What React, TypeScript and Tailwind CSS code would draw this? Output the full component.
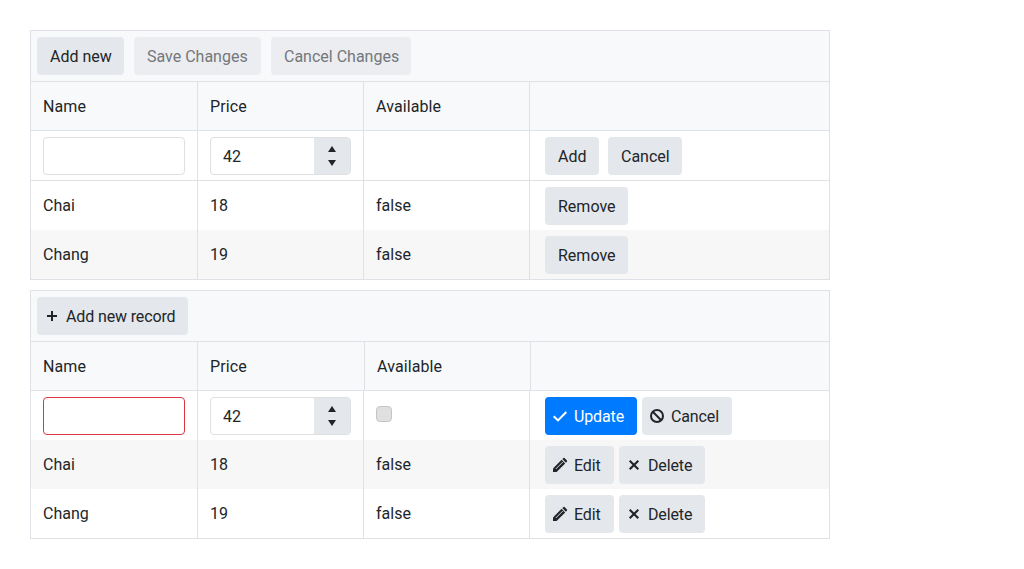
import type { ReactNode } from 'react';
import clsx from 'clsx';

const line = 'border-[#dee2e6]';

function Icon({ children }: { children: ReactNode }) {
  return (
    <svg className="h-4 w-4 shrink-0" viewBox="0 0 16 16" fill="none">
      {children}
    </svg>
  );
}

const PlusIcon = () => (
  <Icon>
    <path d="M7 3h2v4h4v2H9v4H7V9H3V7h4z" fill="currentColor" />
  </Icon>
);

const CheckIcon = () => (
  <Icon>
    <path d="M1.7 8.2 6 12.4 14.3 4" stroke="currentColor" strokeWidth="2" />
  </Icon>
);

const CancelIcon = () => (
  <Icon>
    <circle cx="8" cy="8" r="6" stroke="currentColor" strokeWidth="2" />
    <path d="M3.8 3.8 12.2 12.2" stroke="currentColor" strokeWidth="2" />
  </Icon>
);

const PencilIcon = () => (
  <Icon>
    <path d="M1 15V11.4L9.6 2.8 13.2 6.4 4.6 15z" fill="currentColor" />
    <path d="M10.3 2.1 11.5 1Q12 .7 12.5 1L15 3.5Q15.3 4 15 4.5L13.9 5.7z" fill="currentColor" />
    <path d="M3.8 12 10.9 4.9" stroke="#e4e7eb" strokeWidth=".9" />
  </Icon>
);

const CloseIcon = () => (
  <Icon>
    <path d="M3.7 3.7 12.3 12.3M12.3 3.7 3.7 12.3" stroke="currentColor" strokeWidth="2.1" />
  </Icon>
);

interface ButtonProps {
  children: ReactNode;
  width: string;
  icon?: ReactNode;
  primary?: boolean;
  disabled?: boolean;
}

function Button({ children, width, icon, primary, disabled }: ButtonProps) {
  return (
    <button
      type="button"
      disabled={disabled}
      className={clsx(
        'flex h-[38px] shrink-0 items-center rounded-[4px] whitespace-nowrap',
        width,
        icon ? 'gap-[6px] pl-[7px] tracking-[-0.13px]' : 'pl-[13px]',
        primary && 'bg-[#007bff] text-white',
        !primary && !disabled && 'bg-[#e4e7eb]',
        disabled && 'bg-[#ebedf0] text-[#74777b]',
      )}
    >
      {icon}
      <span className="pt-[2px]">{children}</span>
    </button>
  );
}

function NameInput({ invalid }: { invalid?: boolean }) {
  return (
    <input
      aria-label="Name"
      className={clsx(
        'block h-[38px] w-[142px] rounded-[4px] border bg-white px-3 outline-none',
        invalid ? 'border-[#dc3545]' : 'border-[#dddfe1]',
      )}
    />
  );
}

function PriceInput() {
  return (
    <div className="flex h-[38px] w-[141px] overflow-hidden rounded-[4px] border border-[#dddfe1] bg-white">
      <input aria-label="Price" defaultValue="42" className="w-[103px] pt-[2px] pl-3 outline-none" />
      <div className="flex flex-1 flex-col items-center justify-center gap-[8px] bg-[#e4e7eb]">
        <svg className="h-[6px] w-2" viewBox="0 0 8 6">
          <path d="M4 0 8 6H0z" fill="currentColor" />
        </svg>
        <svg className="h-[6px] w-2" viewBox="0 0 8 6">
          <path d="M0 0h8L4 6z" fill="currentColor" />
        </svg>
      </div>
    </div>
  );
}

interface RowProps {
  cells: [ReactNode, ReactNode, ReactNode];
  actions?: ReactNode;
  className: string;
  columns?: string;
  gap?: string;
  heading?: boolean;
}

function Row({ cells, actions, className, columns, gap, heading }: RowProps) {
  return (
    <div
      className={clsx(
        'grid',
        columns ?? 'grid-cols-[167px_166px_166px_1fr]',
        heading && 'h-[49px] border-b border-[#dee2e6] bg-[#f8f9fb] tracking-[0.1px]',
        className,
      )}
    >
      {cells.map((cell, i) => (
        <div key={i} className={clsx('flex items-center border-r pl-3', line, heading && 'pt-[2px]')}>
          {cell}
        </div>
      ))}
      <div className={clsx('flex items-start pt-[6px] pl-[15px]', gap ?? 'gap-[5px]')}>{actions}</div>
    </div>
  );
}

function Toolbar({ children }: { children: ReactNode }) {
  return <div className={clsx('flex h-[51px] gap-[10px] border-b bg-[#f8f9fb] p-[6px]', line)}>{children}</div>;
}

const products = [
  { name: 'Chai', price: 18 },
  { name: 'Chang', price: 19 },
];

export default function App() {
  return (
    <main className="flex h-[569px] w-full flex-col gap-[10px] bg-white p-[30px] font-['Roboto',sans-serif] text-[16px] leading-6 text-[#212529]">
      <section className={clsx('w-[800px] border', line)}>
        <Toolbar>
          <Button width="w-[87px]">Add new</Button>
          <Button width="w-[127px]" disabled>Save Changes</Button>
          <Button width="w-[140px]" disabled>Cancel Changes</Button>
        </Toolbar>
        <Row className="" heading cells={['Name', 'Price', 'Available']} />
        <Row
          className="h-[50px] border-b border-[#dee2e6]"
          cells={[<NameInput />, <PriceInput />, null]}
          gap="gap-[9px]"
          actions={
            <>
              <Button width="w-[54px]">Add</Button>
              <Button width="w-[74px]">Cancel</Button>
            </>
          }
        />
        {products.map((p, i) => (
          <Row
            key={p.name}
            className={clsx('h-[49px]', i === 1 && 'bg-[#f7f7f7]')}
            cells={[p.name, p.price, 'false']}
            actions={<Button width="w-[83px]">Remove</Button>}
          />
        ))}
      </section>

      <section className={clsx('w-[800px] border', line)}>
        <Toolbar>
          <Button width="w-[151px]" icon={<PlusIcon />}>Add new record</Button>
        </Toolbar>
        <Row
          className=""
          heading
          columns="grid-cols-[167px_167px_166px_1fr]"
          cells={['Name', 'Price', 'Available']}
        />
        <Row
          className="h-[49px]"
          cells={[
            <NameInput invalid />,
            <PriceInput />,
            <span className="mb-[3px] h-4 w-4 rounded-[4px] border border-[#c4c5c6] bg-[#e0e0e0]" />,
          ]}
          actions={
            <>
              <Button width="w-[92px]" primary icon={<CheckIcon />}>Update</Button>
              <Button width="w-[90px]" icon={<CancelIcon />}>Cancel</Button>
            </>
          }
        />
        {products.map((p, i) => (
          <Row
            key={p.name}
            className={clsx('h-[49px]', i === 0 && 'bg-[#f7f7f7]')}
            cells={[p.name, p.price, 'false']}
            actions={
              <>
                <Button width="w-[69px]" icon={<PencilIcon />}>Edit</Button>
                <Button width="w-[86px]" icon={<CloseIcon />}>Delete</Button>
              </>
            }
          />
        ))}
      </section>
    </main>
  );
}
